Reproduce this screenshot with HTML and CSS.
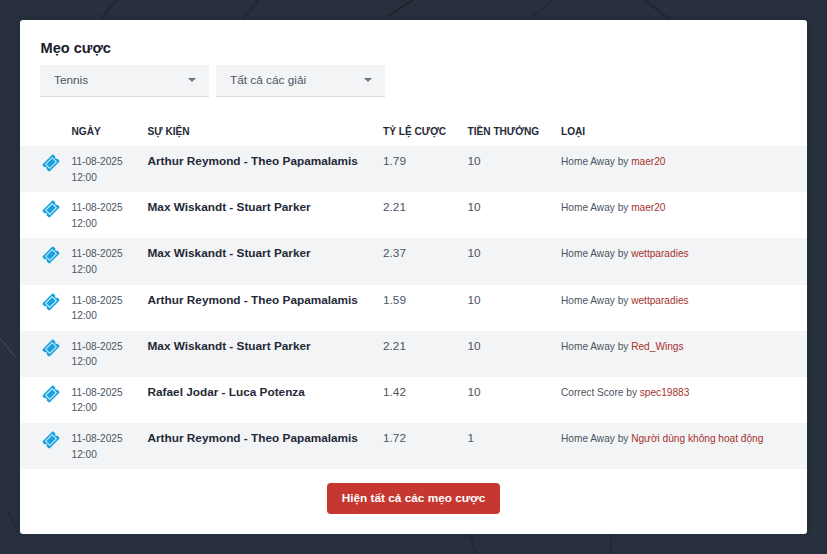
FILE: index.html
```html
<!DOCTYPE html>
<html lang="vi">
<head>
<meta charset="utf-8">
<title>Mẹo cược</title>
<link rel="stylesheet" href="styles.css">
</head>
<body>
<svg class="bg" width="827" height="554" viewBox="0 0 827 554" aria-hidden="true">
  <path class="bg-line wide" d="M100 20 L117 0"/>
  <path class="bg-line wide" d="M243 20 L258 0"/>
  <path class="bg-line strong" d="M388 16 L413 0"/>
  <path class="bg-line" d="M527 20 L554 0"/>
  <path class="bg-line wide" d="M645 0 L670 20"/>
  <path class="bg-line light" d="M0 338 L16 358"/>
  <path class="bg-line" d="M8 510 L18 532"/>
  <path class="bg-line" d="M470 534 L476 554"/>
  <path class="bg-line" d="M612 534 L610 554"/>
</svg>
<main class="card">
  <h1 class="title">Mẹo cược</h1>
  <div class="filters">
    <div class="select"><span>Tennis</span><i class="caret"></i></div>
    <div class="select"><span>Tất cả các giải</span><i class="caret"></i></div>
  </div>
  <table class="tips">
    <thead>
      <tr><th class="c-icon"></th><th class="c-date">NGÀY</th><th class="c-event">SỰ KIỆN</th><th class="c-odds">TỶ LỆ CƯỢC</th><th class="c-bonus">TIỀN THƯỞNG</th><th>LOẠI</th></tr>
    </thead>
    <tbody>
      <tr><td class="icon-cell"><svg class="ticket" viewBox="-52 -84 680 680"><use href="#t"/></svg></td><td class="date">11-08-2025<br>12:00</td><td class="event">Arthur Reymond - Theo Papamalamis</td><td class="num">1.79</td><td class="num">10</td><td class="type">Home Away by <a href="#">maer20</a></td></tr>
      <tr><td class="icon-cell"><svg class="ticket" viewBox="-52 -84 680 680"><use href="#t"/></svg></td><td class="date">11-08-2025<br>12:00</td><td class="event">Max Wiskandt - Stuart Parker</td><td class="num">2.21</td><td class="num">10</td><td class="type">Home Away by <a href="#">maer20</a></td></tr>
      <tr><td class="icon-cell"><svg class="ticket" viewBox="-52 -84 680 680"><use href="#t"/></svg></td><td class="date">11-08-2025<br>12:00</td><td class="event">Max Wiskandt - Stuart Parker</td><td class="num">2.37</td><td class="num">10</td><td class="type">Home Away by <a href="#">wettparadies</a></td></tr>
      <tr><td class="icon-cell"><svg class="ticket" viewBox="-52 -84 680 680"><use href="#t"/></svg></td><td class="date">11-08-2025<br>12:00</td><td class="event">Arthur Reymond - Theo Papamalamis</td><td class="num">1.59</td><td class="num">10</td><td class="type">Home Away by <a href="#">wettparadies</a></td></tr>
      <tr><td class="icon-cell"><svg class="ticket" viewBox="-52 -84 680 680"><use href="#t"/></svg></td><td class="date">11-08-2025<br>12:00</td><td class="event">Max Wiskandt - Stuart Parker</td><td class="num">2.21</td><td class="num">10</td><td class="type">Home Away by <a href="#">Red_Wings</a></td></tr>
      <tr><td class="icon-cell"><svg class="ticket" viewBox="-52 -84 680 680"><use href="#t"/></svg></td><td class="date">11-08-2025<br>12:00</td><td class="event">Rafael Jodar - Luca Potenza</td><td class="num">1.42</td><td class="num">10</td><td class="type">Correct Score by <a href="#">spec19883</a></td></tr>
      <tr><td class="icon-cell"><svg class="ticket" viewBox="-52 -84 680 680"><use href="#t"/></svg></td><td class="date">11-08-2025<br>12:00</td><td class="event">Arthur Reymond - Theo Papamalamis</td><td class="num">1.72</td><td class="num">1</td><td class="type">Home Away by <a href="#">Người dùng không hoạt động</a></td></tr>
    </tbody>
  </table>
  <div class="more"><a class="btn" href="#">Hiện tất cả các mẹo cược</a></div>
</main>
<svg class="defs" width="0" height="0" aria-hidden="true">
  <defs>
    <g id="t" transform="rotate(-45 288 256)">
      <path fill="#19a2e0" d="M128 160h320v192H128V160zm400 96c0 26.51 21.49 48 48 48v96c0 26.51-21.49 48-48 48H48c-26.51 0-48-21.49-48-48v-96c26.51 0 48-21.49 48-48s-21.49-48-48-48v-96c0-26.51 21.49-48 48-48h480c26.51 0 48 21.49 48 48v96c-26.51 0-48 21.49-48 48zm-48-104c0-13.255-10.745-24-24-24H120c-13.255 0-24 10.745-24 24v208c0 13.255 10.745 24 24 24h336c13.255 0 24-10.745 24-24V152z"/>
    </g>
  </defs>
</svg>
</body>
</html>
```
FILE: styles.css
```css
html, body { margin: 0; padding: 0; }
body {
  width: 827px;
  height: 554px;
  overflow: hidden;
  background: #282f3d;
  font-family: "Liberation Sans", Arial, sans-serif;
  color: #1f2937;
  padding: 20px;
  box-sizing: border-box;
}
.bg { position: absolute; left: 0; top: 0; }
.bg-line { fill: none; stroke: #222835; stroke-width: 1.5; }
.bg-line.wide { stroke-width: 3; }
.bg-line.strong { stroke: #1c222d; }
.bg-line.light { stroke: #3a4350; }
.defs { position: absolute; }
.card {
  position: relative;
  width: 787px;
  height: 514px;
  background: #fff;
  border-radius: 3px;
  padding-top: 20px;
  box-sizing: border-box;
  box-shadow: 0 0 4px rgba(20, 50, 55, .6);
}
.title {
  margin: 0 0 0 20.5px;
  font-size: 14.6px;
  line-height: 16px;
  font-weight: 700;
  color: #1a202c;
}
.filters { display: flex; gap: 7px; margin: 9px 0 0 20px; }
.select {
  height: 30px;
  padding: 0 13.5px 1px 14px;
  background: #f3f4f6;
  border-bottom: 1px solid #d8dbe0;
  display: flex;
  align-items: center;
  justify-content: space-between;
  width: 141.5px;
  font-size: 11.8px;
  color: #4b5563;
}
.caret {
  width: 0; height: 0;
  border-left: 4.5px solid transparent;
  border-right: 4.5px solid transparent;
  border-top: 4.5px solid #6b7280;
}
.tips {
  width: 787px;
  margin-top: 20px;
  border-collapse: collapse;
  table-layout: fixed;
}
.tips th {
  padding: 8px 0 7px;
  text-align: left;
  font-size: 10.15px;
  line-height: 14px;
  font-weight: 700;
  color: #1f2937;
}
.c-icon { width: 51.5px; }
.c-date { width: 76px; }
.c-event { width: 235.5px; }
.c-odds { width: 84.5px; }
.c-bonus { width: 93.5px; }
.tips td { height: 46.2px; box-sizing: border-box; padding: 0; vertical-align: top; }
.tips tbody tr:nth-child(odd) { background: #f3f4f6; }
.ticket { display: block; width: 18px; height: 18px; margin: 8px 0 0 22px; }
.tips .date { font-size: 10.15px; line-height: 15.5px; color: #4b5563; padding-top: 8px; }
.tips .event { font-size: 11.8px; font-weight: 700; line-height: 16px; color: #1f2937; padding-top: 7px; }
.tips .num { font-size: 11.8px; line-height: 16px; color: #4b5563; padding-top: 7px; }
.tips .type { font-size: 10.15px; line-height: 16px; color: #4b5563; padding-top: 8px; }
.type a { color: #a5322d; text-decoration: none; }
.more { display: flex; justify-content: center; margin-top: 14px; }
.btn {
  display: block;
  width: 173px;
  height: 31px;
  line-height: 30px;
  text-align: center;
  background: #c53730;
  border-radius: 4px;
  color: #fff;
  font-size: 11.8px;
  font-weight: 700;
  text-decoration: none;
}
```
